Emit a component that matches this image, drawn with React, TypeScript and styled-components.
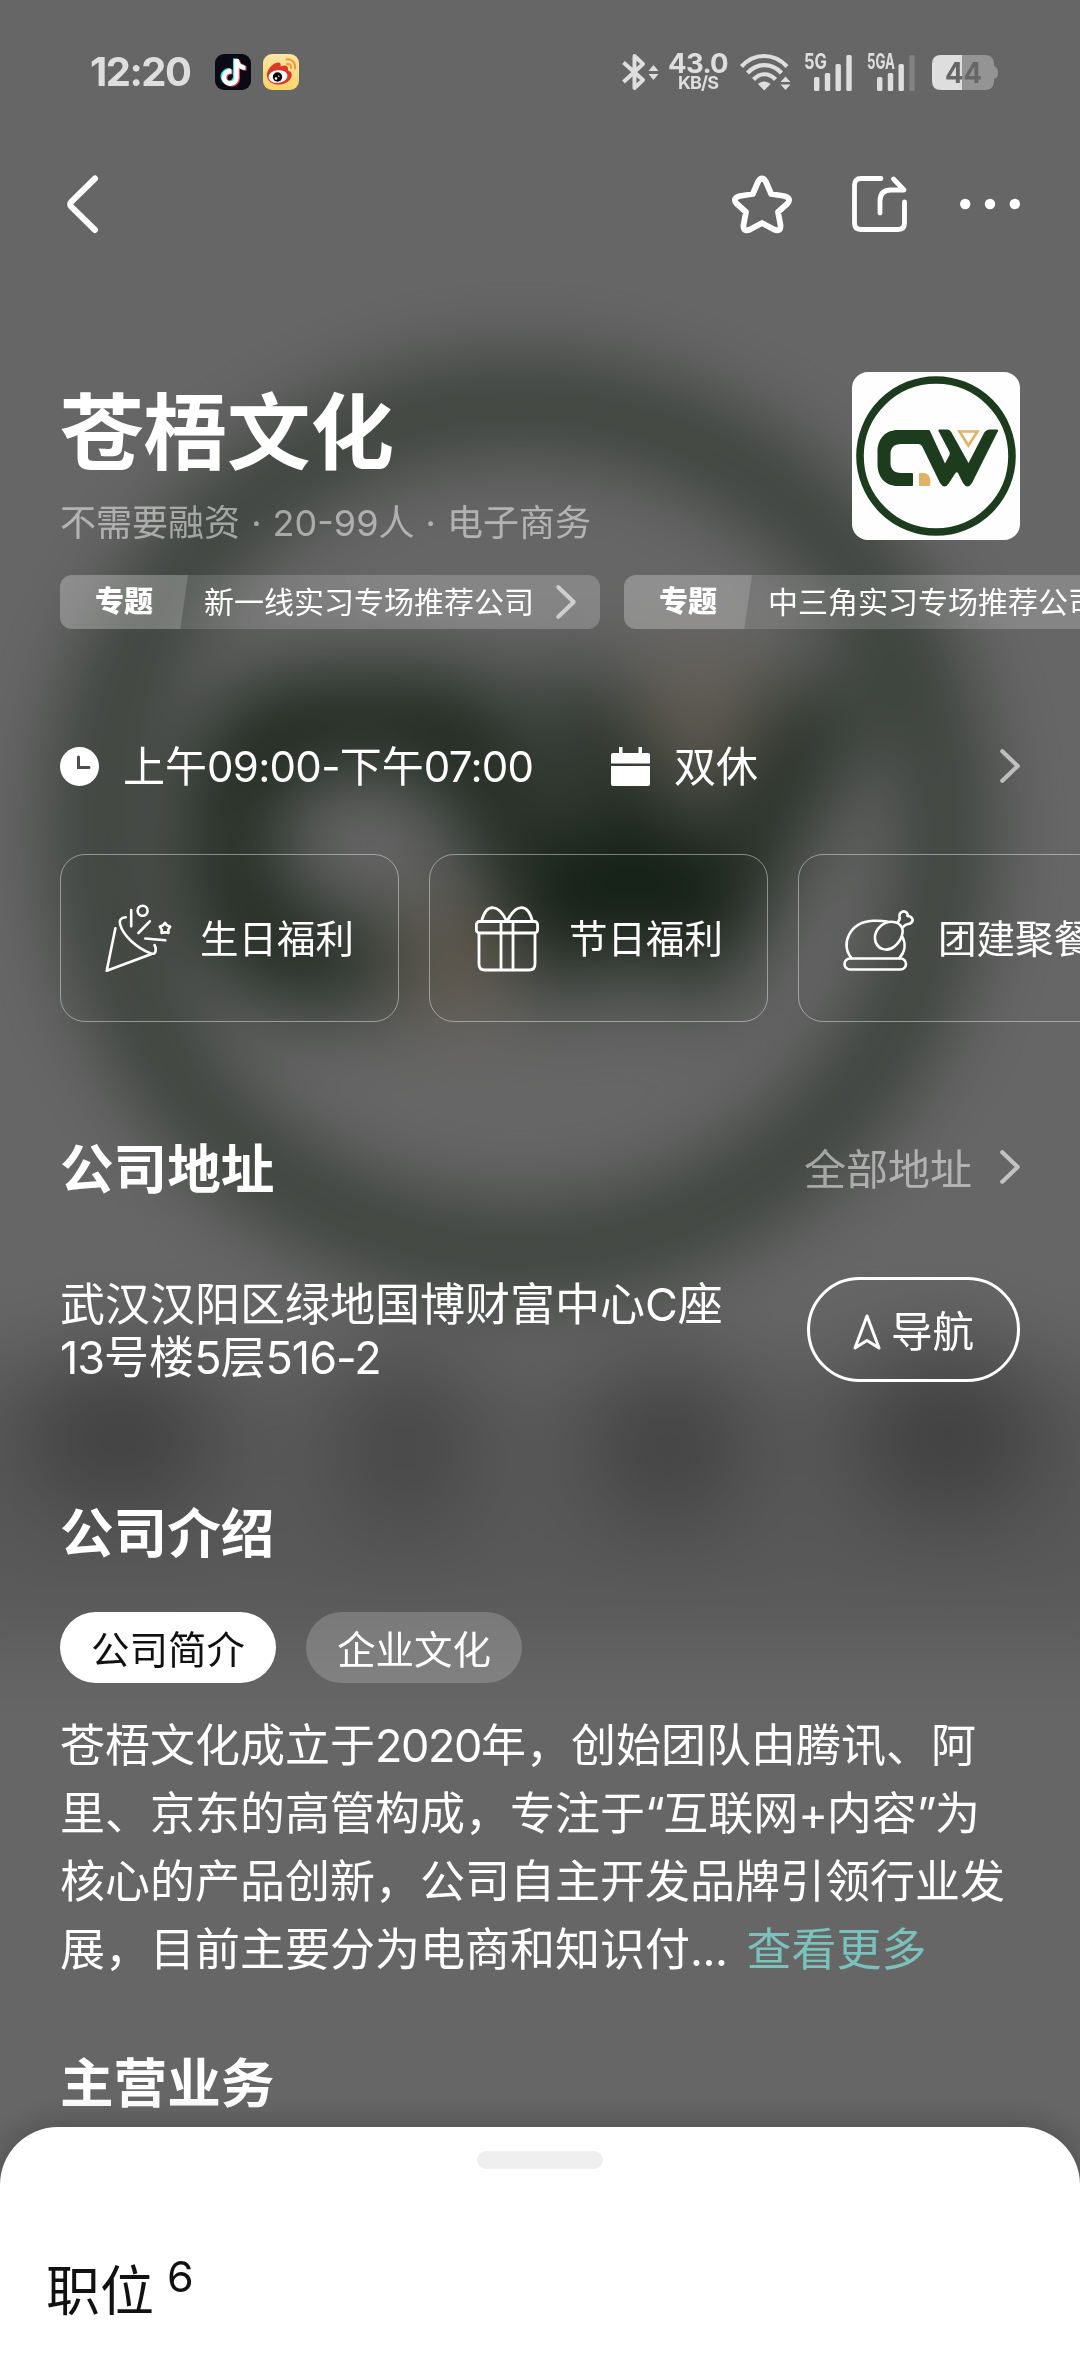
import React from 'react';
import styled, { createGlobalStyle } from 'styled-components';
import { FaTiktok } from 'react-icons/fa6';

const GlobalStyle = createGlobalStyle`
  * { box-sizing: border-box; }
  body { margin: 0; background: #666; }
`;

const Screen = styled.div`
  position: relative;
  width: 1080px;
  height: 2373px;
  overflow: hidden;
  display: flex;
  flex-direction: column;
  background: #666;
  color: #fff;
  font-family: Inter, "Noto Sans CJK SC", sans-serif;
`;

const Backdrop = styled.svg`
  position: absolute;
  inset: 0;
  width: 1080px;
  height: 2373px;
`;

const Content = styled.main`
  position: relative;
  flex: 1;
  display: flex;
  flex-direction: column;
`;

const Latin = styled.span<{ $track: number }>`
  letter-spacing: ${(p) => p.$track}px;
`;

/* ---------- status bar ---------- */

const StatusBar = styled.header`
  height: 144px;
  padding: 0 82px 0 90px;
  display: flex;
  align-items: center;
  color: #dedede;
`;

const Clock = styled.span`
  width: 125px;
  font-size: 40px;
  line-height: 40px;
  font-weight: 700;
  letter-spacing: -1.5px;
`;

const AppBadge = styled.span<{ $bg: string }>`
  width: 36px;
  height: 36px;
  margin-right: 12px;
  border-radius: 9px;
  background: ${(p) => p.$bg};
  display: grid;
  place-items: center;
  overflow: hidden;
`;

const NoteStack = styled.span`
  display: grid;
  place-items: center;
  > * { grid-area: 1 / 1; }
`;

const NoteLayer = styled(FaTiktok)<{ $dx: number; $dy: number }>`
  color: ${(p) => p.color};
  transform: translate(${(p) => p.$dx}px, ${(p) => p.$dy}px);
`;

const Indicators = styled.div`
  margin-left: auto;
  display: flex;
  align-items: center;
`;

const Glyph = styled.svg<{ $ml?: number }>`
  display: block;
  flex: none;
  overflow: visible;
  margin-left: ${(p) => p.$ml ?? 0}px;
`;

const Speed = styled.div`
  width: 58px;
  margin-left: 10px;
  display: flex;
  flex-direction: column;
  align-items: center;
  font-weight: 700;
`;

const SpeedValue = styled.span`
  font-size: 27.5px;
  line-height: 21px;
  letter-spacing: -0.7px;
`;

const SpeedUnit = styled.span`
  font-size: 18px;
  line-height: 18px;
  font-weight: 700;
  letter-spacing: -0.9px;
`;

/* ---------- navigation ---------- */

const NavBar = styled.nav`
  height: 120px;
  padding: 0 60px 0 67px;
  display: flex;
  align-items: center;
  justify-content: space-between;
`;

const NavActions = styled.div`
  display: flex;
  align-items: center;
  gap: 60px;
`;

/* ---------- hero ---------- */

const Hero = styled.section`
  padding: 108px 60px 0;
  height: 280px;
  display: flex;
  justify-content: space-between;
`;

const CompanyName = styled.h1`
  margin: 19px 0 26px;
  font-size: 83.5px;
  line-height: 84px;
  font-weight: 700;
`;

const CompanyMeta = styled.p`
  margin: 0;
  font-size: 36px;
  line-height: 44px;
  word-spacing: 1px;
  color: rgba(255, 255, 255, 0.5);
  white-space: pre;
`;

const LogoTile = styled.div`
  width: 168px;
  height: 168px;
  border-radius: 16px;
  background: #fefefe;
  overflow: hidden;
`;

const Topics = styled.div`
  margin-top: 31px;
  padding-left: 60px;
  display: flex;
  gap: 24px;
  overflow: hidden;
`;

const Topic = styled.div`
  flex: none;
  width: 540px;
  height: 54px;
  border-radius: 12px;
  overflow: hidden;
  display: flex;
  align-items: center;
  background: linear-gradient(90deg, rgba(255, 255, 255, 0.13) 20%, rgba(255, 255, 255, 0.2) 70%);
`;

const TopicLabel = styled.span`
  width: 128px;
  height: 54px;
  padding-left: 35px;
  font-size: 29px;
  line-height: 54px;
  font-weight: 900;
  background: rgba(255, 255, 255, 0.16);
  clip-path: polygon(0 0, 100% 0, 94% 100%, 0 100%);
`;

const TopicText = styled.span`
  width: 368px;
  padding-left: 16px;
  font-size: 30px;
  line-height: 54px;
  white-space: nowrap;
`;

/* ---------- working hours and perks ---------- */

const HoursRow = styled.section`
  margin-top: 107px;
  height: 60px;
  padding: 0 60px;
  display: flex;
  align-items: center;
  font-size: 42px;
  line-height: 60px;
`;

const HoursItem = styled.span<{ $width?: number; $gap: number }>`
  display: flex;
  align-items: center;
  gap: ${(p) => p.$gap}px;
  width: ${(p) => (p.$width ? `${p.$width}px` : 'auto')};
  white-space: nowrap;
`;

const Label = styled.span`
  padding-top: 2px;
`;

const Spacer = styled.span`
  flex: 1;
`;

const Perks = styled.section`
  margin-top: 58px;
  padding-left: 60px;
  display: flex;
  gap: 30px;
  overflow: hidden;
`;

const Perk = styled.div`
  flex: none;
  width: 339px;
  height: 168px;
  border: 1px solid rgba(255, 255, 255, 0.42);
  border-radius: 25px;
  padding-left: 44px;
  display: flex;
  align-items: center;
  font-size: 38.5px;
  line-height: 60px;
`;

const PerkIcon = styled.span<{ $left?: number; $top?: number }>`
  width: 95px;
  padding-left: ${(p) => p.$left ?? 0}px;
  padding-top: ${(p) => p.$top ?? 0}px;
`;

/* ---------- sections ---------- */

const SectionHead = styled.div<{ $top: number }>`
  margin-top: ${(p) => p.$top}px;
  height: 60px;
  padding: 2px 60px 0;
  display: flex;
  align-items: center;
  justify-content: space-between;
`;

const SectionTitle = styled.h2`
  margin: 0;
  font-size: 53.6px;
  line-height: 60px;
  font-weight: 700;
`;

const MoreLink = styled.span`
  display: flex;
  align-items: center;
  gap: 28px;
  font-size: 42px;
  line-height: 60px;
  color: rgba(255, 255, 255, 0.5);
`;

const Raised = styled.span`
  padding-bottom: 7px;
`;

const AddressRow = styled.div`
  margin-top: 78px;
  padding: 0 60px;
  height: 105px;
  display: flex;
  align-items: center;
  justify-content: space-between;
`;

const Address = styled.p`
  margin: 3px 0 0;
  width: 670px;
  font-size: 45px;
  line-height: 53px;
`;

const NavigateButton = styled.button`
  width: 213px;
  height: 105px;
  padding: 4px 0 0 0;
  border: 3px solid #fff;
  border-radius: 53px;
  background: transparent;
  color: #fff;
  font: inherit;
  font-size: 41.5px;
  line-height: 60px;
  display: flex;
  align-items: center;
  justify-content: center;
  gap: 10px;
`;

const Tabs = styled.div`
  margin-top: 49px;
  padding: 0 60px;
  display: flex;
  gap: 30px;
`;

const Tab = styled.button<{ $active?: boolean }>`
  width: 216px;
  height: 71px;
  padding: 4px 0 0;
  border: 0;
  border-radius: 36px;
  font: inherit;
  font-size: 38.5px;
  line-height: 60px;
  color: ${(p) => (p.$active ? '#111' : '#fff')};
  background: ${(p) => (p.$active ? '#fff' : 'rgba(255, 255, 255, 0.18)')};
`;

const Intro = styled.p`
  margin: 29px 0 0;
  padding: 0 0 0 60px;
  font-size: 45px;
  line-height: 68px;
  white-space: nowrap;
`;

const ReadMore = styled.span`
  margin-left: 19px;
  color: #7bc1bc;
`;

/* ---------- bottom sheet ---------- */

const Sheet = styled.section`
  position: relative;
  height: 246px;
  padding: 24px 46px 0;
  border-radius: 58px 58px 0 0;
  background: #fff;
  box-shadow: 0 0 36px rgba(0, 0, 0, 0.28);
  color: #111;
`;

const Handle = styled.div`
  width: 126px;
  height: 18px;
  margin: 0 auto;
  border-radius: 9px;
  background: #efefef;
`;

const SheetTitle = styled.div`
  margin-top: 93px;
  display: flex;
  align-items: flex-start;
  gap: 13px;
  font-size: 54px;
  line-height: 60px;
`;

const Count = styled.span`
  font-size: 43px;
  line-height: 28px;
`;

/* ---------- drawings ---------- */

const BrandMark = () => (
  <g>
    <circle cx="84" cy="84" r="76" fill="none" stroke="#1c3c1d" strokeWidth="7.6" />
    <path
      fill="#1c3c1d"
      d="M76.5 58H46C33 58 25.5 67 25.5 80V92C25.5 105 33 114 46 114H60Q61 114 61 113V102Q61 101 60 101H49C42 101 38.5 97 38.5 91V82C38.5 76 42 72 49 72H66Q69 72 70.5 75L88 111Q92.5 118 97 111L103.5 101Q104.7 99.5 106 101L111 111Q115.5 118 120 111L146 59Q146.5 57.5 145 57.5H138Q134 57.5 132 61L116.5 91L99.5 60.5Q98 57.5 95 57.5H87Q86 57.5 86.5 59L97.5 80Q98 82 97.5 83L93 91.5L78 59Q77.5 58 76.5 58Z"
    />
    <path fill="none" stroke="#dfb266" strokeWidth="2.6" d="M107.5 59.5H125.5L116.4 73.5Z" />
    <path fill="#dfb266" d="M67 102Q67 101 68 101H71Q78 101 78.3 109V113Q78.3 114 77.3 114H68Q67 114 67 113Z" />
  </g>
);

const BlurredCover = () => (
  <Backdrop viewBox="0 0 1080 2373">
    <defs>
      <filter id="cover-blur" filterUnits="userSpaceOnUse" x="-300" y="0" width="1700" height="2000">
        <feGaussianBlur stdDeviation="46" colorInterpolationFilters="sRGB" />
      </filter>
    </defs>
    <rect width="1080" height="2373" fill="#fff" />
    <g filter="url(#cover-blur)">
      <g transform="translate(50 358) scale(5.6)">
        <BrandMark />
      </g>
      <rect x="-100" y="1370" width="1280" height="270" fill="#dcdcdc" />
      <ellipse cx="118" cy="1432" rx="95" ry="78" fill="#a2a2a2" />
      <ellipse cx="405" cy="1440" rx="62" ry="95" fill="#afafaf" />
      <ellipse cx="668" cy="1440" rx="75" ry="85" fill="#a6a6a6" />
      <ellipse cx="948" cy="1432" rx="95" ry="88" fill="#a2a2a2" />
    </g>
    <rect width="1080" height="2373" fill="#000" fillOpacity="0.6" />
  </Backdrop>
);

const WeiboIcon = () => (
  <svg width="36" height="36" viewBox="0 0 36 36">
    <path fill="#d9392b" d="M4 22C3 17 9 9 15 8.5C18 8.5 18 11 17.5 12.5C21 11 25 11.2 25 14.5C25 16 24.5 16.5 26 17C29 18 29.5 21 28 24C25 29.5 19 31 14 30.5C8 30 4.5 26.5 4 22Z" />
    <ellipse cx="15" cy="22.5" rx="9.5" ry="6.3" fill="#fff" transform="rotate(-6 15 22.5)" />
    <circle cx="14.5" cy="23" r="4.7" fill="#050505" />
    <circle cx="13" cy="24.5" r="1.3" fill="#fff" />
    <circle cx="15.8" cy="22.3" r=".7" fill="#fff" />
    <path fill="none" stroke="#f2963a" strokeWidth="2" strokeLinecap="round" d="M23.5 5.5C29 4.5 33 9 32 14.5M24 10C27 9.5 28.5 11.5 28 14" />
  </svg>
);

const BluetoothIcon = () => (
  <Glyph width="37" height="38" viewBox="0 0 37 38">
    <path fill="none" stroke="#dedede" strokeWidth="4" strokeLinejoin="round" d="M1.5 9.5L21 27L12.5 35V3L21 11L1.5 29" />
    <path fill="#dedede" d="M31.5 12L36.5 18H26.5ZM31.5 27L36.5 21H26.5Z" />
  </Glyph>
);

const WifiIcon = () => (
  <Glyph $ml={13} width="51" height="38" viewBox="0 0 51 38">
    <path fill="none" stroke="#dedede" strokeWidth="4.2" d="M1.5 13.5C14 -.5 34 -.5 47 13.5M7.5 20C17 9.5 32 9.5 41.5 20M13.5 26.5C20 19.5 29 19.5 35.5 26.5" />
    <path fill="#dedede" d="M18 31C21.5 27.5 27 27.5 30.5 31L24.2 37.5ZM45.5 23.5L50.5 29H40.5ZM45.5 37L50.5 31.5H40.5Z" />
  </Glyph>
);

const SignalIcon = ({ label, width, weak, ml }: { label: string; width: number; weak?: boolean; ml: number }) => (
  <Glyph $ml={ml} width="48" height="38" viewBox="0 0 48 38">
    <g fill="#dedede">
      <text x="0" y="16.2" fontFamily="Inter, sans-serif" fontSize="21.5" fontWeight="700" textLength={width} lengthAdjust="spacingAndGlyphs">
        {label}
      </text>
      <rect x="10" y="24" width="5.4" height="14" rx="1.5" />
      <rect x="20.8" y="20" width="5.4" height="18" rx="1.5" />
      <rect x="31.5" y="11" width="5.4" height="27" rx="1.5" />
      <rect x="42.3" y="2" width="5.4" height="36" rx="1.5" fillOpacity={weak ? 0.22 : 1} />
    </g>
  </Glyph>
);

const BatteryIcon = () => (
  <Glyph $ml={17} width="66" height="35" viewBox="0 0 66 35">
    <path fill="#949494" d="M30 0H53Q61 0 62 8V11Q66 12 66 17.5Q66 23 62 24V27Q61 35 53 35H30Z" />
    <path fill="#dedede" d="M30 0H9Q0 0 0 9V26Q0 35 9 35H30Z" />
    <text x="13" y="28" fill="#666" fontFamily="Inter, sans-serif" fontSize="29" fontWeight="700" textLength="37" lengthAdjust="spacingAndGlyphs">
      44
    </text>
  </Glyph>
);

const Chevron = () => (
  <Glyph width="20" height="34" viewBox="0 0 20 34">
    <path fill="none" stroke="#fff" strokeOpacity="0.6" strokeWidth="4.2" strokeLinecap="round" strokeLinejoin="round" d="M2.3 2.3L17.7 17L2.3 31.7" />
  </Glyph>
);

const PartyIcon = () => (
  <Glyph width="67" height="68" viewBox="0 0 67 68" fill="none" stroke="#fff" strokeWidth="2.6" strokeLinecap="round" strokeLinejoin="round">
    <path d="M10.4 24.3L1.7 66.7L46.5 50" />
    <path d="M20.7 13.3C15.5 13.5 14 16.5 15 20C18 32 32 44 46 49.5C51 51 52 45 49.5 41" />
    <path d="M26.2 6V22.3M44.8 17.3L33.4 29M40.3 34.5L60.3 36.3" />
    <circle cx="37.6" cy="6.7" r="5" />
    <path d="M60 18.8L61.8 21.3L65.2 22.6L63.3 25.5L63.4 29L60 28.2L56.6 29L56.7 25.5L54.8 22.6L58.2 21.3Z" />
  </Glyph>
);

const GiftIcon = () => (
  <Glyph width="64" height="65" viewBox="0 0 64 65" fill="none" stroke="#fff" strokeWidth="2.8" strokeLinejoin="round">
    <rect x="1.4" y="15.5" width="61.2" height="11.5" rx="3" />
    <path d="M4 27V58Q4 64 10 64H54Q60 64 60 58V27M26 15.5V64M38 15.5V64" />
    <path d="M6.5 15.5C11 -3 23 -3 32 15.5C41 -3 53 -3 57.5 15.5" />
  </Glyph>
);

const RoastIcon = () => (
  <Glyph width="71" height="61" viewBox="0 0 71 61" fill="none" stroke="#fff" strokeWidth="2.6" strokeLinecap="round" strokeLinejoin="round">
    <rect x="1.5" y="48.5" width="61.5" height="11" rx="5.5" />
    <path d="M8.5 48C-3 35 6 12 30 10.8Q38 10.5 44 11.5M59.5 27C63 34 62 42 56.5 48" />
    <path d="M53 12.5C42 9 31 19 32 29C33 39 44 43 52 36C59 30 62 20 57.5 15.5Q55.5 13 53 12.5Z" />
    <path d="M54.5 12.5Q57.5 9.5 56.5 6.5C56 2 61 0 63.5 2.5Q65 4 64.5 6C69 6 71 10 68.5 12.5C66 15 64 13 60.5 16.5" />
  </Glyph>
);

export default function App() {
  return (
    <Screen>
      <GlobalStyle />
      <BlurredCover />
      <Content>
        <StatusBar>
          <Clock>12:20</Clock>
          <AppBadge $bg="#0b0a14">
            <NoteStack>
              <NoteLayer size={27} color="#3be0e0" $dx={-1.2} $dy={-0.8} />
              <NoteLayer size={27} color="#f0425c" $dx={1.2} $dy={0.8} />
              <NoteLayer size={27} color="#fff" $dx={0} $dy={0} />
            </NoteStack>
          </AppBadge>
          <AppBadge $bg="linear-gradient(#fbe6a4, #fbd468)">
            <WeiboIcon />
          </AppBadge>
          <Indicators>
            <BluetoothIcon />
            <Speed>
              <SpeedValue>43.0</SpeedValue>
              <SpeedUnit>KB/S</SpeedUnit>
            </Speed>
            <WifiIcon />
            <SignalIcon ml={13} label="5G" width={23} />
            <SignalIcon ml={15} label="5GA" width={28} weak />
            <BatteryIcon />
          </Indicators>
        </StatusBar>

        <NavBar>
          <Glyph width="31" height="58" viewBox="0 0 31 58">
            <path fill="none" stroke="#fff" strokeWidth="6" strokeLinecap="round" d="M28 3.5L4.5 26.5Q2 29.2 4.5 32L28 55" />
          </Glyph>
          <NavActions>
            <Glyph width="60" height="58" viewBox="0 0 60 58">
              <path
                fill="none"
                stroke="#fff"
                strokeWidth="5.8"
                strokeLinejoin="round"
                d="M20.8 19L26.2 6.5Q30 .5 33.8 6.5L39.2 19L52 21Q60 23 55.5 28.5L46 37L48.5 50Q49 57.5 42 54.5L30 48L18 54.5Q11 57.5 11.5 50L14 37L4.5 28.5Q0 23 8 21Z"
              />
            </Glyph>
            <Glyph width="55" height="56" viewBox="0 0 55 56">
              <path
                fill="none"
                stroke="#fff"
                strokeWidth="4.8"
                strokeLinecap="round"
                strokeLinejoin="round"
                d="M29 2.5H9Q2.5 2.5 2.5 9V47Q2.5 53.5 9 53.5H46Q52.5 53.5 52.5 47V26M28 37V25Q28 14 39 14H52L41.5 3"
              />
            </Glyph>
            <Glyph $ml={-7} width="60" height="12" viewBox="0 0 60 12" fill="#fff">
              <circle cx="5.2" cy="6" r="5.2" />
              <circle cx="30" cy="6" r="5.2" />
              <circle cx="54.8" cy="6" r="5.2" />
            </Glyph>
          </NavActions>
        </NavBar>

        <Hero>
          <div>
            <CompanyName>苍梧文化</CompanyName>
            <CompanyMeta>不需要融资 · 20-99人 · 电子商务</CompanyMeta>
          </div>
          <LogoTile>
            <svg width="168" height="168" viewBox="0 0 168 168">
              <BrandMark />
            </svg>
          </LogoTile>
        </Hero>

        <Topics>
          <Topic>
            <TopicLabel>专题</TopicLabel>
            <TopicText>新一线实习专场推荐公司</TopicText>
            <Chevron />
          </Topic>
          <Topic>
            <TopicLabel>专题</TopicLabel>
            <TopicText>中三角实习专场推荐公司</TopicText>
            <Chevron />
          </Topic>
        </Topics>

        <HoursRow>
          <HoursItem $width={551} $gap={24}>
            <Glyph width="39" height="39" viewBox="0 0 39 39">
              <circle cx="19.5" cy="19.5" r="19.5" fill="#fff" />
              <path fill="none" stroke="#4b504b" strokeWidth="3" strokeLinecap="round" d="M18.5 10V20.5H29" />
            </Glyph>
            <Label>
              上午<Latin $track={-0.7}>09:00-</Latin>下午<Latin $track={-0.7}>07:00</Latin>
            </Label>
          </HoursItem>
          <HoursItem $gap={24}>
            <Glyph width="39" height="39" viewBox="0 0 39 39" fill="#fff">
              <path d="M8 0H11.5V6H27.5V0H31V6H37Q39 6 39 8V16.5H0V8Q0 6 2 6H8ZM0 19H39V37Q39 39 37 39H2Q0 39 0 37Z" />
            </Glyph>
            <Label>双休</Label>
          </HoursItem>
          <Spacer />
          <Chevron />
        </HoursRow>

        <Perks>
          <Perk>
            <PerkIcon><PartyIcon /></PerkIcon>
            <Label>生日福利</Label>
          </Perk>
          <Perk>
            <PerkIcon $left={1}><GiftIcon /></PerkIcon>
            <Label>节日福利</Label>
          </Perk>
          <Perk>
            <PerkIcon $top={5}><RoastIcon /></PerkIcon>
            <Label>团建聚餐</Label>
          </Perk>
        </Perks>

        <SectionHead $top={117}>
          <SectionTitle>公司地址</SectionTitle>
          <MoreLink>
            全部地址
            <Raised><Chevron /></Raised>
          </MoreLink>
        </SectionHead>
        <AddressRow>
          <Address>
            武汉汉阳区绿地国博财富中心C座
            <br />
            <Latin $track={-1}>13</Latin>号楼<Latin $track={-1}>5</Latin>层<Latin $track={-1}>516-2</Latin>
          </Address>
          <NavigateButton>
            <Glyph width="28" height="36" viewBox="0 0 28 36">
              <path fill="none" stroke="#fff" strokeWidth="3" strokeLinejoin="round" d="M14 2L26 34L14 26.5L2 34Z" />
            </Glyph>
            导航
          </NavigateButton>
        </AddressRow>

        <SectionHead $top={121}>
          <SectionTitle>公司介绍</SectionTitle>
        </SectionHead>
        <Tabs>
          <Tab $active>公司简介</Tab>
          <Tab>企业文化</Tab>
        </Tabs>
        <Intro>
          苍梧文化成立于<Latin $track={-1.4}>2020</Latin>年，创始团队由腾讯、阿
          <br />
          里、京东的高管构成，专注于<Latin $track={-1.5}>“</Latin>互联网<Latin $track={-1.5}>+</Latin>内容<Latin $track={-1.5}>”</Latin>为
          <br />
          核心的产品创新，公司自主开发品牌引领行业发
          <br />
          展，目前主要分为电商和知识付<Latin $track={-0.5}>...</Latin>
          <ReadMore>查看更多</ReadMore>
        </Intro>

        <SectionHead $top={69}>
          <SectionTitle>主营业务</SectionTitle>
        </SectionHead>
      </Content>
      <Sheet>
        <Handle />
        <SheetTitle>
          职位
          <Count>6</Count>
        </SheetTitle>
      </Sheet>
    </Screen>
  );
}
